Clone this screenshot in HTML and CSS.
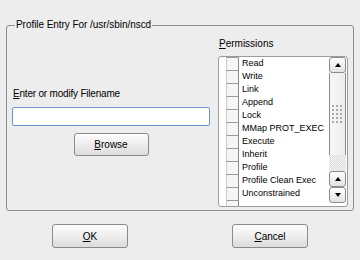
FILE: index.html
```html
<!DOCTYPE html>
<html lang="en">
<head>
  <meta charset="UTF-8" />
  <meta name="viewport" content="width=device-width, initial-scale=1.0" />
  <title>Profile Entry</title>
  <link rel="stylesheet" href="styles.css">
</head>
<body>
  <fieldset class="group">
    <legend>Profile Entry For /usr/sbin/nscd</legend>
    <div class="group-body">
      <div class="file-col">
        <label class="caption" for="filename"><u>E</u>nter or modify Filename</label>
        <input id="filename" class="file-input" type="text">
        <button class="btn browse"><u>B</u>rowse</button>
      </div>
      <div class="perm-col">
        <div class="caption"><u>P</u>ermissions</div>
        <div class="perm-list">
          <ul class="perm-items">
            <li><span class="check"></span>Read</li>
            <li><span class="check"></span>Write</li>
            <li><span class="check"></span>Link</li>
            <li><span class="check"></span>Append</li>
            <li><span class="check"></span>Lock</li>
            <li><span class="check"></span>MMap PROT_EXEC</li>
            <li><span class="check"></span>Execute</li>
            <li><span class="check"></span>Inherit</li>
            <li><span class="check"></span>Profile</li>
            <li><span class="check"></span>Profile Clean Exec</li>
            <li><span class="check"></span>Unconstrained</li>
            <li><span class="check"></span></li>
          </ul>
          <div class="scrollbar">
            <div class="sb-btn"><span class="arrow-up"></span></div>
            <div class="sb-thumb"><span class="grip"></span></div>
            <div class="sb-track"></div>
            <div class="sb-btn"><span class="arrow-up"></span></div>
            <div class="sb-btn"><span class="arrow-down"></span></div>
          </div>
        </div>
      </div>
    </div>
  </fieldset>

  <div class="actions">
    <button class="btn action"><u>O</u>K</button>
    <button class="btn action"><u>C</u>ancel</button>
  </div>
</body>
</html>
```

FILE: styles.css
```css
body {
  margin: 0;
  width: 360px;
  height: 260px;
  overflow: hidden;
  background: #ededed;
  color: #000;
  font-family: "Liberation Sans", Arial, sans-serif;
  font-size: 10px;
}
u {
  text-decoration-thickness: 1px;
}
.group {
  margin: 19px 6px 0;
  padding: 0;
  border: 1px solid #8d8d8d;
  border-radius: 3px;
}
.group legend {
  margin-left: 8px;
  padding: 0 1px;
  line-height: 12px;
  letter-spacing: -0.05px;
}
.group-body {
  display: flex;
  gap: 8px;
  height: 179px;
  box-sizing: border-box;
  padding: 0 5px 3px;
}
.caption {
  display: block;
  line-height: 12px;
  padding-left: 1px;
}
.file-col {
  width: 198px;
  display: flex;
  flex-direction: column;
  align-items: center;
  padding-top: 57px;
}
.file-col .caption {
  align-self: flex-start;
  letter-spacing: -0.2px;
}
.file-input {
  margin: 7px 0 0;
  width: 198px;
  height: 19px;
  box-sizing: border-box;
  border: 1px solid #6b94d0;
  border-radius: 2px;
  background: #fff;
  padding: 0;
  outline: none;
}
.btn {
  font: inherit;
  color: #000;
  padding: 0;
  border: 1px solid #8a8a8a;
  border-radius: 3px;
  background: linear-gradient(#fefefe, #dcdcdc);
}
.browse {
  margin-top: 7px;
  width: 75px;
  height: 23px;
}
.perm-col {
  width: 130px;
  padding-top: 7px;
}
.perm-list {
  margin-top: 6px;
  height: 151px;
  box-sizing: border-box;
  border: 1px solid #9c9c9c;
  border-radius: 3px;
  background: #fff;
  display: flex;
  overflow: hidden;
}
.perm-items {
  list-style: none;
  margin: 0;
  padding: 0 0 0 7px;
  flex: 1;
  min-width: 0;
  overflow: hidden;
  font-size: 9px;
}
.perm-items li {
  display: flex;
  align-items: center;
  height: 13px;
  line-height: 13px;
  white-space: nowrap;
}
.check {
  flex: none;
  width: 13px;
  height: 13px;
  box-sizing: border-box;
  margin-right: 3px;
  border-top: 1px solid #9a9a9a;
  border-left: 1px solid #cdcdcd;
  border-right: 1px solid #8a8a8a;
  background: #f6f6f6;
}
.scrollbar {
  flex: none;
  width: 17px;
  margin-right: 1px;
  display: flex;
  flex-direction: column;
}
.sb-btn {
  height: 16px;
  box-sizing: border-box;
  border: 1px solid #8c8c8c;
  border-radius: 3px;
  background: linear-gradient(#fff, #e2e2e2);
  display: flex;
  align-items: center;
  justify-content: center;
}
.arrow-up {
  border-left: 3px solid transparent;
  border-right: 3px solid transparent;
  border-bottom: 4px solid #000;
}
.arrow-down {
  border-left: 3px solid transparent;
  border-right: 3px solid transparent;
  border-top: 4px solid #000;
}
.sb-thumb {
  height: 82px;
  border-left: 1px solid #8c8c8c;
  border-right: 1px solid #8c8c8c;
  background: linear-gradient(90deg, #f8f7f8, #eeecee);
  display: flex;
  align-items: center;
  justify-content: center;
}
.grip {
  width: 11px;
  height: 19px;
  background-image: radial-gradient(circle at 1px 1px, #aaa 0.9px, transparent 1.2px);
  background-size: 4px 4px;
}
.sb-track {
  height: 16px;
  background-color: #f2f2f2;
  background-image: repeating-conic-gradient(#dedede 0 25%, transparent 0 50%);
  background-size: 2px 2px;
}
.actions {
  display: grid;
  grid-template-columns: 1fr 1fr;
  justify-items: center;
  margin-top: 13px;
}
.action {
  width: 76px;
  height: 24px;
}
```
